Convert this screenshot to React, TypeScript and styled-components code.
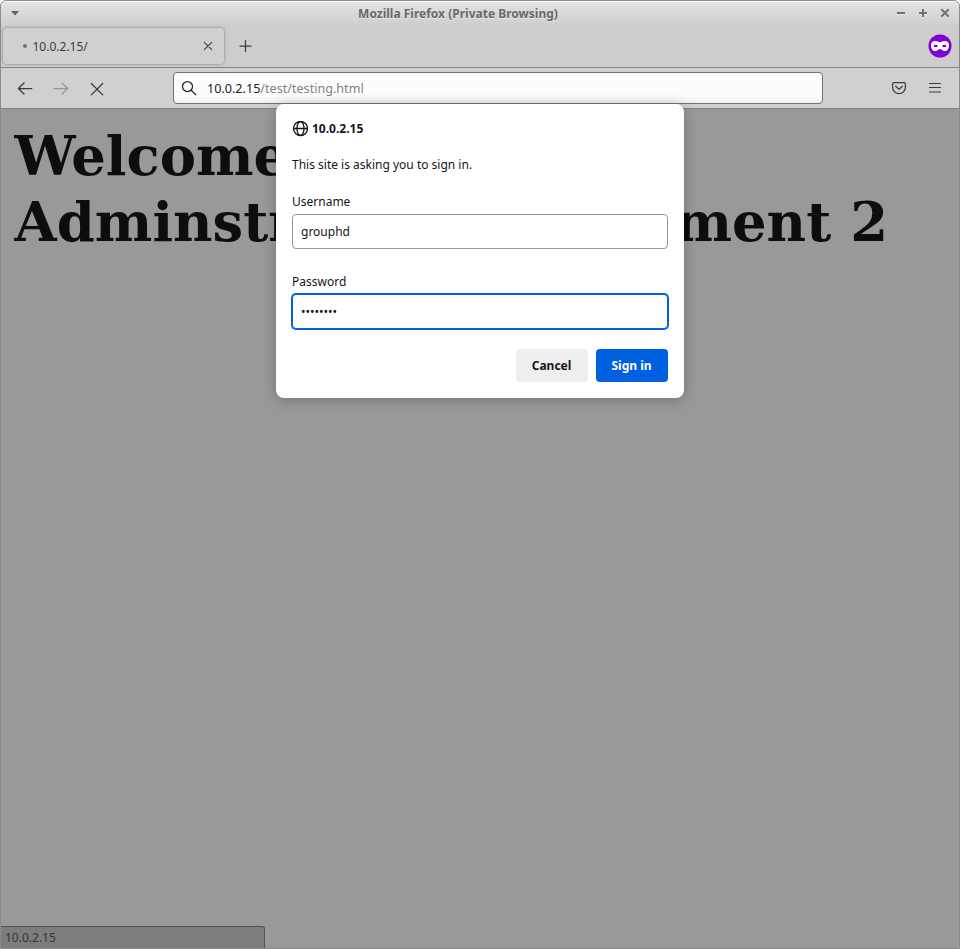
import React from 'react';
import styled, { createGlobalStyle } from 'styled-components';

const GlobalStyle = createGlobalStyle`
  * { box-sizing: border-box; }
  body { margin: 0; background: #fff; }
  button, input { font: inherit; }
`;

const Window = styled.div`
  position: relative;
  display: flex;
  flex-direction: column;
  width: 960px;
  height: 949px;
  overflow: hidden;
  border: 1px solid #8b8b8b;
  border-radius: 6px 6px 0 0;
  background: #cdcdcd;
  color: #3b3b3b;
  font: 12px 'Noto Sans', sans-serif;
`;

const TitleBar = styled.header`
  display: flex;
  align-items: center;
  flex: none;
  height: 25px;
  padding: 0 8px 2px 9px;
  border-top: 1px solid #fafafa;
  background: linear-gradient(#e3e3e3, #cdcdcd);
`;

const Title = styled.div`
  flex: 1;
  padding-top: 1px;
  margin-left: 1px;
  text-align: center;
  font-weight: 700;
  line-height: 22px;
  color: #686868;
  text-shadow: 0 1px #e8e8e8;
`;

const WindowControls = styled.div`
  display: flex;
  gap: 10px;
  color: #717171;
`;

const Icon = styled.svg`
  display: block;
  flex: none;
  fill: none;
  stroke: currentColor;
  stroke-linecap: round;
  stroke-linejoin: round;
`;

const ControlIcon = styled(Icon)`
  stroke-width: 2;
  stroke-linecap: butt;
  filter: drop-shadow(0 1px 0 #e8e8e8);
`;

const TabBar = styled.nav`
  display: flex;
  align-items: center;
  flex: none;
  height: 42px;
  padding: 0 7px 2px 2px;
  border-bottom: 1px solid #858585;
`;

const Tab = styled.div`
  display: flex;
  align-items: center;
  width: 221px;
  height: 36px;
  padding: 0 10px 0 20px;
  border-radius: 4px;
  background: #d0d0d0;
  box-shadow: 0 0 3px #777;
`;

const LoadingDot = styled.span`
  width: 4px;
  height: 4px;
  margin-right: 5.5px;
  border-radius: 50%;
  background: #747474;
`;

const TabLabel = styled.span`
  flex: 1;
  padding-top: 2px;
`;

const NewTab = styled.div`
  flex: 1;
  padding: 1px 0 0 14px;
`;

const Toolbar = styled.div`
  display: flex;
  align-items: center;
  flex: none;
  height: 41px;
  padding: 0 16px;
  border-bottom: 1px solid #7e7e7e;
  background: #d0d0d0;
`;

const NavButtons = styled.div`
  display: flex;
  gap: 20px;
  width: 156px;
  padding-top: 1px;
`;

const AddressBar = styled.div`
  display: flex;
  align-items: center;
  width: 650px;
  height: 32px;
  padding-left: 7px;
  border: 1px solid #747474;
  border-radius: 4px;
  background: linear-gradient(#fcfcfc 75%, #f0f0f0);
  font-size: 12.6px;
  color: #222;
`;

const Url = styled.span`
  padding-left: 10px;
`;

const UrlPath = styled.span`
  color: #838383;
`;

const ToolbarActions = styled.div`
  display: flex;
  justify-content: flex-end;
  flex: 1;
  gap: 20px;
`;

const Page = styled.main`
  flex: 1;
  padding: 14px 13.6px 0;
  background: #99999a;
`;

const Heading = styled.h1`
  margin: 0;
  font: 700 54.4px/66px 'DejaVu Serif', serif;
  color: #0d0d0e;
  white-space: nowrap;
`;

const StatusPanel = styled.div`
  position: absolute;
  left: 0;
  bottom: 0;
  width: 264px;
  height: 22px;
  padding-left: 4px;
  border: 1px solid #515152;
  border-width: 1px 1px 0 0;
  border-radius: 0 3px 0 0;
  background: #7d7d7e;
  line-height: 21px;
  color: #343435;
`;

const Dialog = styled.form`
  position: absolute;
  left: 275px;
  top: 103px;
  width: 408px;
  height: 294px;
  padding: 16px;
  border-radius: 8px;
  background: #fff;
  box-shadow: 0 2px 14px rgba(0, 0, 0, 0.25);
  color: #15141a;
`;

const SiteName = styled.div`
  display: flex;
  align-items: center;
  gap: 4px;
  height: 17px;
  font-weight: 700;
`;

const Message = styled.p`
  margin: 19px 0 20px;
  line-height: 17px;
`;

const Field = styled.label`
  display: block;
  height: 80px;
  line-height: 17px;
`;

const Input = styled.input`
  display: block;
  width: 376px;
  height: 35px;
  margin-top: 4px;
  padding: 0 8px;
  border: 1px solid #959595;
  border-radius: 4px;
  outline: none;
  background: #fff;
  color: #15141a;
`;

const PasswordInput = styled(Input)`
  border-color: #0061e0;
  box-shadow: 0 0 0 1px #0061e0;
`;

const DialogButtons = styled.div`
  display: flex;
  justify-content: flex-end;
  gap: 8px;
  margin-top: -4px;
`;

const DialogButton = styled.button<{ $primary?: boolean }>`
  width: 72px;
  height: 33px;
  padding: 0 1px 0 0;
  border: 0;
  border-radius: 4px;
  background: ${(p) => (p.$primary ? '#0061e0' : '#eeeef0')};
  color: ${(p) => (p.$primary ? '#fbfbfe' : '#15141a')};
  font-weight: 700;
`;

const BackIcon = () => (
  <Icon width="16" height="16" viewBox="0 0 16 16" strokeWidth="1.25">
    <path d="M14.8 7.500H1.500M7 2 1.400 7.500 7 13" />
  </Icon>
);

const ForwardIcon = () => (
  <Icon width="16" height="16" viewBox="0 0 16 16" strokeWidth="1.25" opacity="0.4">
    <path d="M1.200 7.500h13.300M9 2l5.600 5.500L9 13" />
  </Icon>
);

const MaskIcon = () => (
  <Icon width="24" height="24" viewBox="0 0 24 24" strokeWidth="0">
    <circle cx="12" cy="12" r="11.5" fill="#8000d7" />
    <path
      fill="#fff"
      fillRule="evenodd"
      d="M7.4 7C9.4 7 10.600 8.200 12 8.200S14.600 7 16.600 7C19.500 7 21 8.400 21 10.900c0 3.600-1.600 6.200-4.400 6.200-2 0-3-2-4.600-2s-2.600 2-4.600 2C4.600 17.100 3 14.500 3 10.900 3 8.400 4.500 7 7.400 7ZM5.400 12.100c1.200 1.600 3.500 1.600 4.600 0-1.200-1.800-3.500-1.800-4.600 0Zm8.600 0c1.100 1.600 3.400 1.600 4.600 0-1.100-1.800-3.400-1.800-4.600 0Z"
    />
  </Icon>
);

export default function App() {
  return (
    <>
      <GlobalStyle />
      <Window>
        <TitleBar>
          <Icon width="10" height="8" viewBox="0 0 10 8">
            <path d="M1 2h8L5 6.500Z" fill="#606060" stroke="none" />
          </Icon>
          <Title>Mozilla Firefox (Private Browsing)</Title>
          <WindowControls>
            <ControlIcon width="12" height="12" viewBox="0 0 12 12">
              <path d="M2 6h8" />
            </ControlIcon>
            <ControlIcon width="12" height="12" viewBox="0 0 12 12">
              <path d="M2 6h8M6 2v8" />
            </ControlIcon>
            <ControlIcon width="12" height="12" viewBox="0 0 12 12">
              <path d="m2.300 2.300 7.400 7.400M9.700 2.300 2.300 9.700" />
            </ControlIcon>
          </WindowControls>
        </TitleBar>

        <TabBar>
          <Tab>
            <LoadingDot />
            <TabLabel>10.0.2.15/</TabLabel>
            <Icon width="12" height="12" viewBox="0 0 12 12" strokeWidth="1.1">
              <path d="m2.300 2.300 7.400 7.400M9.700 2.300 2.300 9.700" />
            </Icon>
          </Tab>
          <NewTab>
            <Icon width="16" height="16" viewBox="0 0 16 16" strokeWidth="1.250">
              <path d="M2 8.200h11M7.500 2.700v11" />
            </Icon>
          </NewTab>
          <MaskIcon />
        </TabBar>

        <Toolbar>
          <NavButtons>
            <BackIcon />
            <ForwardIcon />
            <Icon width="16" height="16" viewBox="0 0 16 16" strokeWidth="1.250">
              <path d="m2.300 2.500 11.400 11.400M13.700 2.500 2.300 13.900" />
            </Icon>
          </NavButtons>
          <AddressBar>
            <Icon width="16" height="16" viewBox="0 0 16 16" strokeWidth="1.250">
              <circle cx="6.500" cy="6.500" r="5" />
              <path d="m10.200 10.200 4.500 4.500" />
            </Icon>
            <Url>
              10.0.2.15<UrlPath>/test/testing.html</UrlPath>
            </Url>
          </AddressBar>
          <ToolbarActions>
            <Icon width="16" height="16" viewBox="0 0 16 16" strokeWidth="1.250">
              <path d="M3 2.600h10a1.400 1.400 0 0 1 1.400 1.400v3.300a6.400 6.400 0 0 1-12.800 0V4A1.400 1.400 0 0 1 3 2.600Z" />
              <path d="M4.700 6.300 8 9.400l3.300-3.100" />
            </Icon>
            <Icon width="16" height="16" viewBox="0 0 16 16" strokeWidth="1.200">
              <path d="M2.500 3.500h11M2.500 7.500h11M2.500 12h11" />
            </Icon>
          </ToolbarActions>
        </Toolbar>

        <Page>
          <Heading>
            Welcome to
            <br />
            Adminstration Assignment 2
          </Heading>
        </Page>

        <StatusPanel>10.0.2.15</StatusPanel>

        <Dialog>
          <SiteName>
            <Icon width="16" height="16" viewBox="-0.5 0.5 16 16" strokeWidth="1.300">
              <circle cx="8" cy="8" r="7" />
              <ellipse cx="8" cy="8" rx="3.500" ry="7" />
              <path d="M1.500 8h13" />
            </Icon>
            10.0.2.15
          </SiteName>
          <Message>This site is asking you to sign in.</Message>
          <Field>
            Username
            <Input type="text" defaultValue="grouphd" />
          </Field>
          <Field>
            Password
            <PasswordInput type="password" defaultValue="password" />
          </Field>
          <DialogButtons>
            <DialogButton type="button">Cancel</DialogButton>
            <DialogButton type="button" $primary>
              Sign in
            </DialogButton>
          </DialogButtons>
        </Dialog>
      </Window>
    </>
  );
}
